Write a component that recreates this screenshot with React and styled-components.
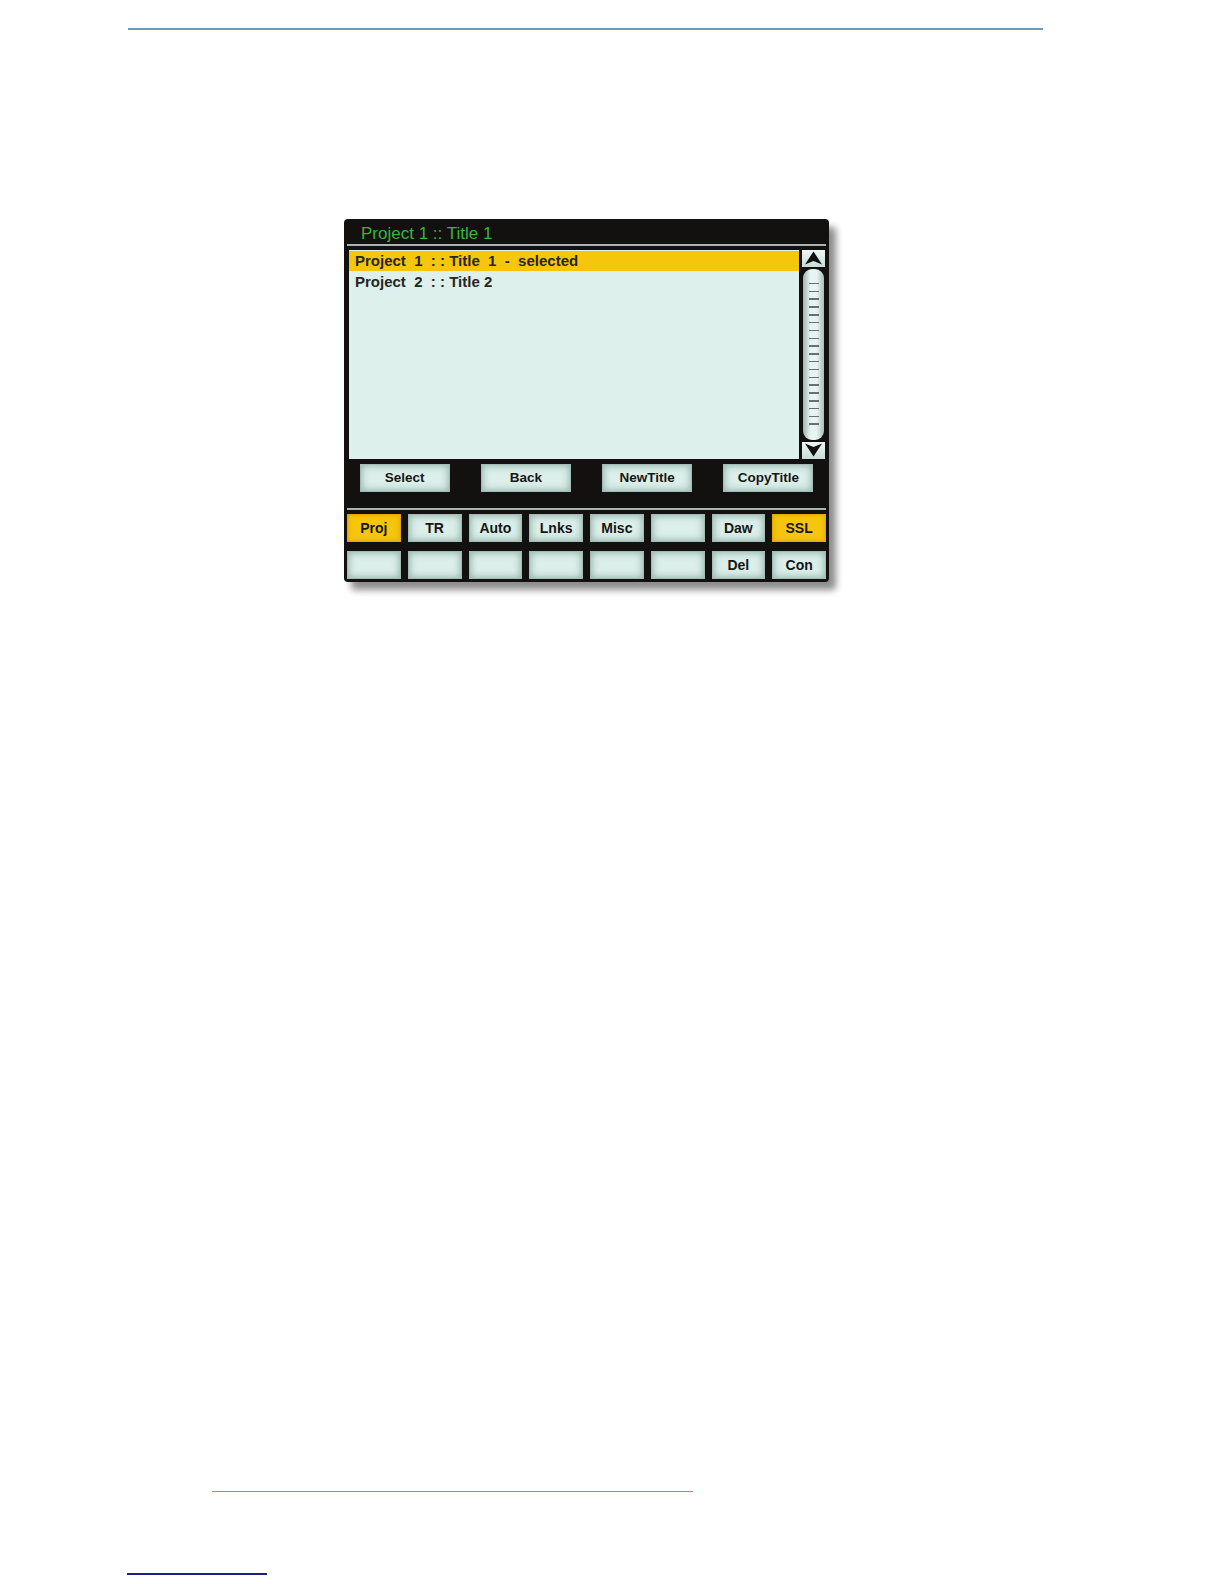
import React from "react";
import styled, { createGlobalStyle } from "styled-components";

const GlobalStyle = createGlobalStyle`
  html, body {
    margin: 0;
    padding: 0;
    background: #ffffff;
    overflow: hidden;
  }
  body {
    font-family: "Liberation Sans", Arial, sans-serif;
  }
`;

const Styled = {
  Page: styled.div`
    width: 1224px;
    height: 1584px;
    overflow: hidden;
    padding-top: 28px;
    box-sizing: border-box;
    display: flex;
    flex-direction: column;
  `,
  Rule: styled.div`
    flex: none;
    height: ${({ thick }) => thick || 1.5}px;
    width: ${({ w }) => w}px;
    margin-left: ${({ left }) => left}px;
    margin-top: ${({ top }) => top || 0}px;
    background: ${({ color }) => color || "#6c9bb8"};
  `,
  Panel: styled.div`
    flex: none;
    width: 485px;
    margin-left: 344px;
    margin-top: 189px;
    background: #13110f;
    border-radius: 4px;
    box-shadow: 7px 8px 7px rgba(0, 0, 0, 0.45);
    display: flex;
    flex-direction: column;
    padding-bottom: 3px;
  `,
  Header: styled.div`
    height: 25px;
    padding: 5px 0 0 17px;
    box-sizing: border-box;
    color: #3cb33c;
    font-size: 17px;
    line-height: 19px;
    white-space: pre;
  `,
  Divider: styled.div`
    height: 2px;
    margin: ${({ m }) => m};
    background: #a8b4b1;
  `,
  ListArea: styled.div`
    display: flex;
    gap: 3px;
    padding: 0 4px 0 5px;
    height: 209px;
  `,
  List: styled.div`
    flex: 1;
    background: #def0eb;
    padding-top: 1px;
    display: flex;
    flex-direction: column;
  `,
  Row: styled.div`
    height: 20px;
    padding-left: 6px;
    display: flex;
    align-items: center;
    font-size: 15px;
    font-weight: bold;
    color: #262626;
    white-space: pre;
    background: ${({ selected }) => (selected ? "#f5c60c" : "transparent")};
    margin-bottom: 1px;
  `,
  Scroll: styled.div`
    width: 23px;
    display: flex;
    flex-direction: column;
    gap: 1px;
  `,
  Arrow: styled.div`
    height: 17px;
    background: linear-gradient(#eef7f5, #c9dcd7);
    display: flex;
    align-items: center;
    justify-content: center;
  `,
  Track: styled.div`
    flex: 1;
    padding: 1px 1px;
    display: flex;
  `,
  Thumb: styled.div`
    flex: 1;
    border-radius: 9px;
    background: linear-gradient(90deg, #9fb3ae 0%, #e8f4f1 35%, #e8f4f1 65%, #a9bdb8 100%);
    display: flex;
    flex-direction: column;
    align-items: center;
    justify-content: space-evenly;
    padding: 8px 0;
  `,
  Tick: styled.div`
    width: 10px;
    height: 1.5px;
    background: #66716f;
  `,
  Actions: styled.div`
    display: grid;
    grid-template-columns: repeat(4, 1fr);
    justify-items: center;
    margin-top: 5px;
  `,
  Tabs: styled.div`
    display: grid;
    grid-template-columns: repeat(8, 1fr);
    column-gap: 7px;
    row-gap: 9px;
    padding: 0 3px;
  `,
  Key: styled.div`
    width: ${({ w }) => (w ? `${w}px` : "auto")};
    height: ${({ h }) => h}px;
    display: flex;
    align-items: center;
    justify-content: center;
    font-size: ${({ fs }) => fs}px;
    font-weight: bold;
    color: #161616;
    border-radius: 1px;
    background: ${({ lit }) => (lit ? "#f6c60e" : "#dcefea")};
    box-shadow: ${({ lit }) =>
      lit
        ? "inset 0 0 0 1px #e0a900, inset 0 0 5px 1px rgba(210, 140, 0, 0.55)"
        : "inset 0 0 0 1px #a3bcb6, inset 0 0 7px 2px rgba(100, 140, 130, 0.6)"};
  `,
};

const ArrowIcon = ({ down }) => (
  <svg width="19" height="14" viewBox="0 0 19 14" style={down ? { transform: "rotate(180deg)" } : undefined}>
    <path d="M1 13.5 L9.5 0.5 L18 13.5 L9.5 10 Z" fill="#111" />
  </svg>
);

const actions = ["Select", "Back", "NewTitle", "CopyTitle"];
const tabs = [
  { label: "Proj", lit: true },
  { label: "TR" },
  { label: "Auto" },
  { label: "Lnks" },
  { label: "Misc" },
  { label: "" },
  { label: "Daw" },
  { label: "SSL", lit: true },
  { label: "" },
  { label: "" },
  { label: "" },
  { label: "" },
  { label: "" },
  { label: "" },
  { label: "Del" },
  { label: "Con" },
];

const App = () => {
  const ticks = Array.from({ length: 19 });
  return (
    <>
      <GlobalStyle />
      <Styled.Page>
        <Styled.Rule left={128} w={915} />
        <Styled.Panel>
          <Styled.Header>Project 1 :: Title 1</Styled.Header>
          <Styled.Divider m="0 3px 4px 3px" />
          <Styled.ListArea>
            <Styled.List>
              <Styled.Row selected>Project  1  : : Title  1  -  selected</Styled.Row>
              <Styled.Row>Project  2  : : Title 2</Styled.Row>
            </Styled.List>
            <Styled.Scroll>
              <Styled.Arrow>
                <ArrowIcon />
              </Styled.Arrow>
              <Styled.Track>
                <Styled.Thumb>
                  {ticks.map((_, i) => (
                    <Styled.Tick key={i} />
                  ))}
                </Styled.Thumb>
              </Styled.Track>
              <Styled.Arrow>
                <ArrowIcon down />
              </Styled.Arrow>
            </Styled.Scroll>
          </Styled.ListArea>
          <Styled.Actions>
            {actions.map(a => (
              <Styled.Key key={a} w={90} h={28} fs={13.5}>
                {a}
              </Styled.Key>
            ))}
          </Styled.Actions>
          <Styled.Divider m="16px 3px 4px 3px" />
          <Styled.Tabs>
            {tabs.map((t, i) => (
              <Styled.Key key={i} h={28} fs={14} lit={t.lit}>
                {t.label}
              </Styled.Key>
            ))}
          </Styled.Tabs>
        </Styled.Panel>
        <Styled.Rule left={212} w={481} top={909} />
        <Styled.Rule left={127} w={140} top={81} thick={2} color="#1c1c8c" />
      </Styled.Page>
    </>
  );
};

export default App;
